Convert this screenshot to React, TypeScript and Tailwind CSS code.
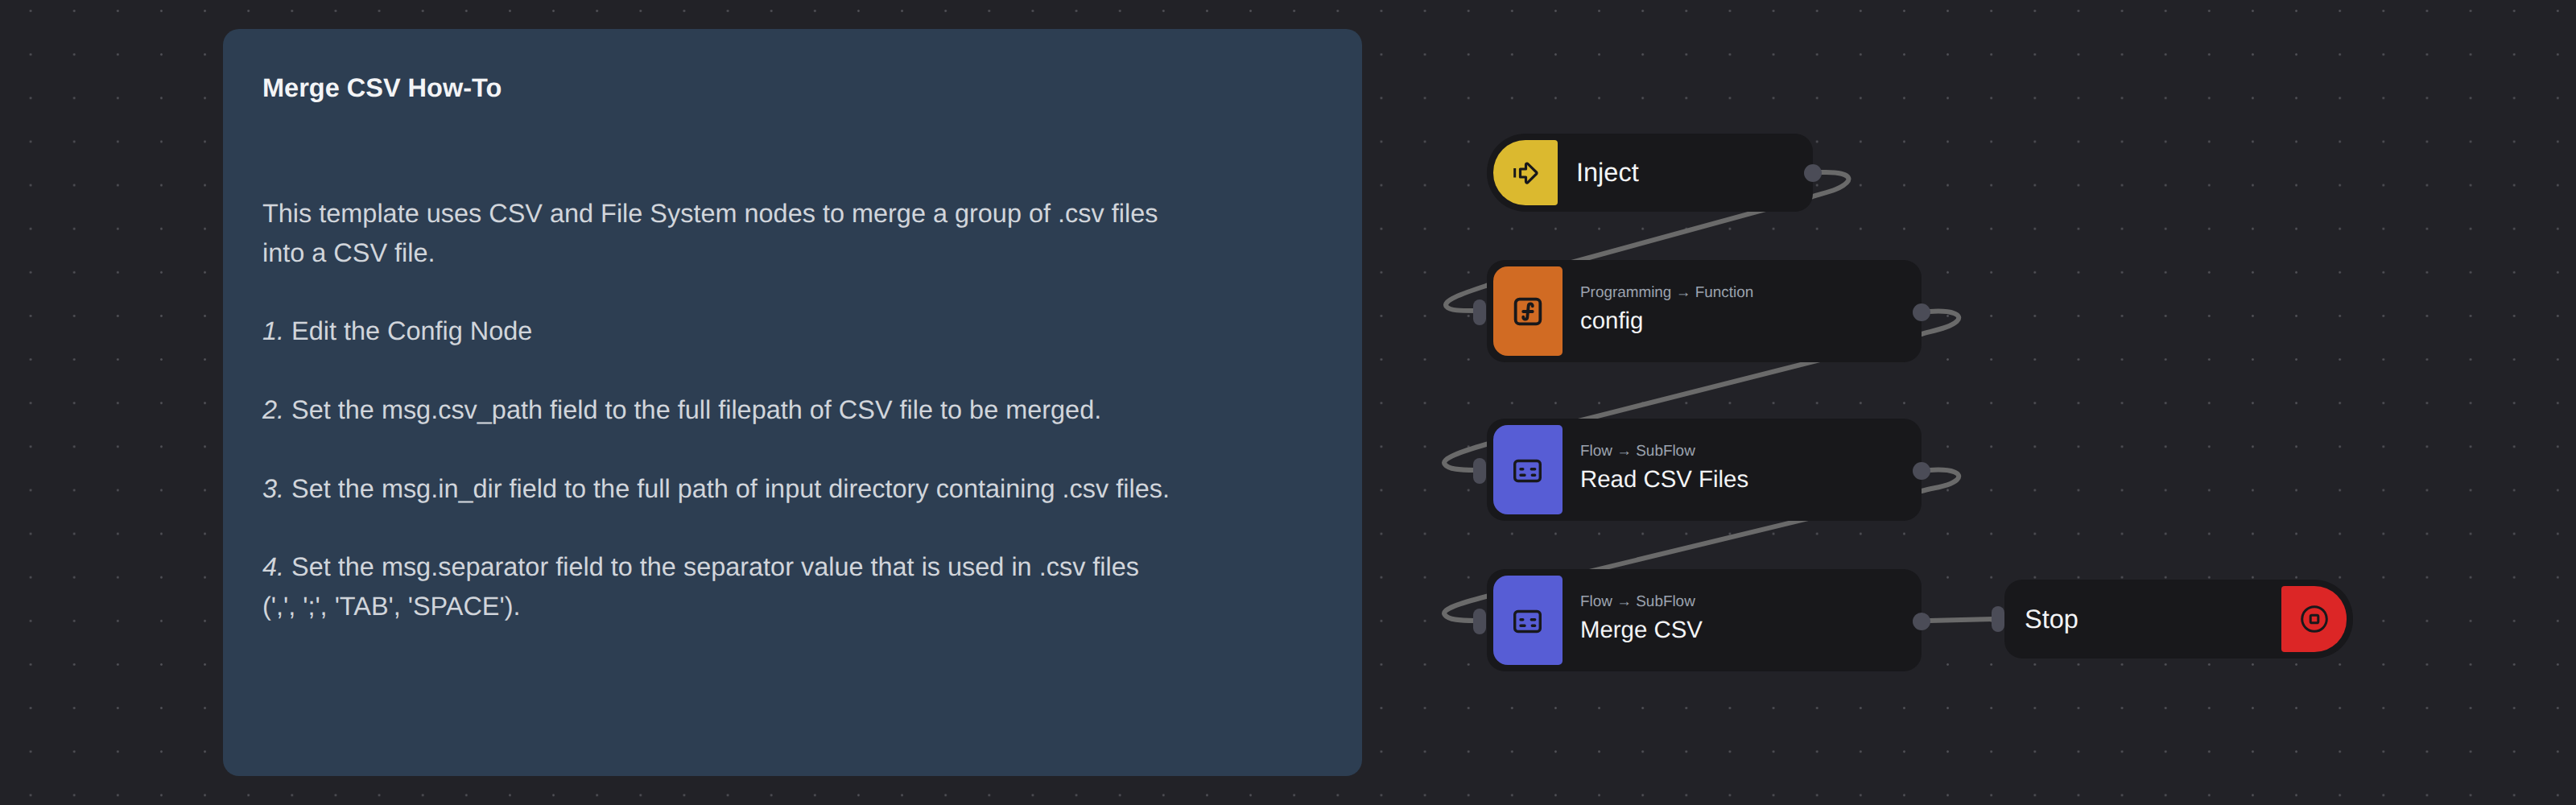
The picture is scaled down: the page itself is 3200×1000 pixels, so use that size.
import React from "react";
import { TbFunction } from "react-icons/tb";

const SANS = "font-['Liberation_Sans',Arial,sans-serif]";

function InjectIcon() {
  return (
    <svg width="46" height="46" viewBox="0 0 46 46" fill="none" stroke="#18181b" strokeWidth="3.2" strokeLinecap="butt" strokeLinejoin="round">
      <path d="M16.5 18H23.5V12.5a1.4 1.4 0 0 1 2.4-1L36.6 22a1.4 1.4 0 0 1 0 2L25.9 34.6a1.4 1.4 0 0 1-2.4-1V28H16.5Z" />
      <path d="M9.7 17V28.5" strokeWidth="3" />
    </svg>
  );
}

function SubflowIcon() {
  return (
    <svg width="46" height="46" viewBox="0 0 46 46" fill="none" stroke="#18181b" strokeWidth="3.4" strokeLinecap="round" strokeLinejoin="round">
      <rect x="6.7" y="11.5" width="31.6" height="25" rx="4" />
      <path d="M14 21.7h2.8M27.3 21.7h4.4M14 29.3h5M28.3 29.3h3.4" />
    </svg>
  );
}

function StopIcon() {
  return (
    <svg width="46" height="46" viewBox="0 0 46 46" fill="none" stroke="#18181b" strokeWidth="3" strokeLinecap="round" strokeLinejoin="round">
      <circle cx="23" cy="23" r="15.3" />
      <rect x="18.2" y="18.2" width="9.6" height="9.6" rx="1.6" />
    </svg>
  );
}

function Label({ sub, title }: { sub: string; title: string }) {
  return (
    <div className="flex flex-col pl-[22px] pt-[16px]">
      <div className="text-[18.9px] leading-[34px] text-[#9ca3af]">{sub}</div>
      <div className="text-[29.4px] leading-[35px] text-[#f3f4f6]">{title}</div>
    </div>
  );
}

function OutDot({ className }: { className: string }) {
  return <div className={`absolute w-[22px] h-[22px] rounded-full bg-[#4b4c57] ${className}`} />;
}

function InBar({ className }: { className: string }) {
  return <div className={`absolute w-[16px] h-[32px] rounded-[8px] bg-[#4b4c57] ${className}`} />;
}

export default function App() {
  return (
    <div className={`relative w-[3200px] h-[1000px] overflow-hidden bg-[#222227] [text-rendering:geometricPrecision] antialiased ${SANS} bg-[radial-gradient(circle,#505056_1px,transparent_1.7px)] bg-[size:54.13px_54.13px] bg-[position:11px_-13.5px]`}>
      {/* Note */}
      <div className="absolute left-[277px] top-[36px] w-[1415px] h-[928px] rounded-[20px] bg-[#2d3e52] pl-[49px] pt-[49px]">
        <h1 className="text-[32.5px] leading-[48px] font-bold text-[#f3f4f6]">Merge CSV How-To</h1>
        <div className="mt-[108px] w-[1150px] text-[32.45px] leading-[48.8px] text-[#d1d5db]">
          <p>This template uses CSV and File System nodes to merge a group of .csv files into a CSV file.</p>
          <p className="mt-[48.8px]"><em>1.</em> Edit the Config Node</p>
          <p className="mt-[48.8px]"><em>2.</em> Set the msg.csv_path field to the full filepath of CSV file to be merged.</p>
          <p className="mt-[48.8px]"><em>3.</em> Set the msg.in_dir field to the full path of input directory containing .csv files.</p>
          <p className="mt-[48.8px]"><em>4.</em> Set the msg.separator field to the separator value that is used in .csv files<br />(',', ';', 'TAB', 'SPACE').</p>
        </div>
      </div>

      {/* Edges */}
      <svg className="absolute left-0 top-0" width="3200" height="1000" fill="none" stroke="#6a6a6a" strokeWidth="6" strokeLinecap="round">
        <path d="M2262 214 C2290 213 2302 219 2294 227 C2285 236 2268 239 2252 244 L1846 355 C1815 365 1791 374 1797 381 C1801 386 1815 386 1832 386" />
        <path d="M2397 387 C2425 385 2439 391 2431 399 C2422 407 2405 410 2387 415 L1846 552 C1815 561 1789 570 1795 577 C1799 583 1815 584 1832 584" />
        <path d="M2397 584 C2425 582 2439 588 2431 596 C2422 604 2405 605 2387 610 L1846 741 C1815 749 1789 757 1795 764 C1799 770 1815 771 1832 771" />
        <path d="M2397 771 L2476 769" />
      </svg>

      {/* Inject */}
      <div className="absolute left-[1847px] top-[166px] w-[405px] h-[97px] flex items-stretch p-[8px] bg-[#18181b] rounded-l-[48px] rounded-r-[22px]">
        <div className="w-[80px] flex items-center justify-center bg-[#dbb92f] rounded-l-[40px] rounded-r-[4px]">
          <InjectIcon />
        </div>
        <div className="pl-[23px] flex items-center text-[32.5px] text-[#f3f4f6]">Inject</div>
        <OutDot className="left-[394px] top-[38px]" />
      </div>

      {/* config */}
      <div className="absolute left-[1847px] top-[323px] w-[540px] h-[127px] flex items-stretch p-[8px] bg-[#18181b] rounded-[22px]">
        <div className="w-[86px] flex items-center justify-center bg-[#d16b23] rounded-l-[18px] rounded-r-[5px]">
          <TbFunction size={46} color="#18181b" />
        </div>
        <Label sub="Programming → Function" title="config" />
        <InBar className="left-[-17px] top-[49px]" />
        <OutDot className="left-[529px] top-[54px]" />
      </div>

      {/* Read CSV Files */}
      <div className="absolute left-[1847px] top-[520px] w-[540px] h-[127px] flex items-stretch p-[8px] bg-[#18181b] rounded-[22px]">
        <div className="w-[86px] flex items-center justify-center bg-[#575dd5] rounded-l-[18px] rounded-r-[5px]">
          <SubflowIcon />
        </div>
        <Label sub="Flow → SubFlow" title="Read CSV Files" />
        <InBar className="left-[-17px] top-[49px]" />
        <OutDot className="left-[529px] top-[54px]" />
      </div>

      {/* Merge CSV */}
      <div className="absolute left-[1847px] top-[707px] w-[540px] h-[127px] flex items-stretch p-[8px] bg-[#18181b] rounded-[22px]">
        <div className="w-[86px] flex items-center justify-center bg-[#575dd5] rounded-l-[18px] rounded-r-[5px]">
          <SubflowIcon />
        </div>
        <Label sub="Flow → SubFlow" title="Merge CSV" />
        <InBar className="left-[-17px] top-[49px]" />
        <OutDot className="left-[529px] top-[54px]" />
      </div>

      {/* Stop */}
      <div className="absolute left-[2490px] top-[720px] w-[433px] h-[98px] flex items-stretch justify-between p-[8px] bg-[#18181b] rounded-l-[22px] rounded-r-[48px]">
        <div className="pl-[17px] flex items-center text-[32.5px] text-[#f3f4f6]">Stop</div>
        <div className="w-[81px] flex items-center justify-center bg-[#dc2626] rounded-l-[4px] rounded-r-[40px]">
          <StopIcon />
        </div>
        <InBar className="left-[-16px] top-[33px]" />
      </div>
    </div>
  );
}
